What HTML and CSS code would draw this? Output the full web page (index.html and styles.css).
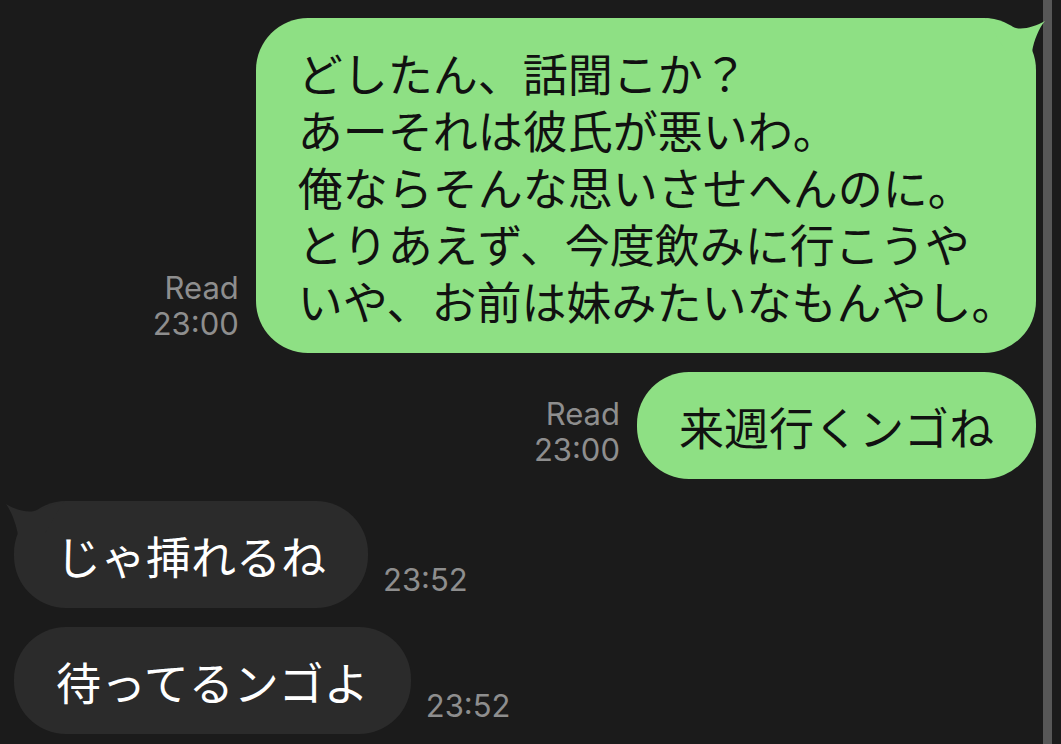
FILE: index.html
```html
<!DOCTYPE html>
<html lang="ja">
<head>
<meta charset="utf-8">
<title>chat</title>
<link rel="stylesheet" href="styles.css">
</head>
<body>
<div class="screen">
  <div class="chat">
    <div class="row out r1">
      <div class="meta"><div>Read</div><div>23:00</div></div>
      <div class="bubble green">
        どしたん、話聞こか？<br>あーそれは彼氏が悪いわ。<br>俺ならそんな思いさせへんのに。<br>とりあえず、今度飲みに行こうや<br>いや、お前は妹みたいなもんやし<span class="trim">。</span>
        <svg class="tail tail-right" viewBox="-50 0 60 40" width="60" height="40"><path d="M -50 0 C -38 2, -30 8, -20 10 C -12 12, 0 8, 9 3 C 3 10, -2 22, -4 34 L -30 34 Z"/></svg>
      </div>
    </div>
    <div class="row out r2">
      <div class="meta"><div>Read</div><div>23:00</div></div>
      <div class="bubble green">来週行くンゴね</div>
    </div>
    <div class="row in r3">
      <div class="bubble dark">じゃ挿れるね
        <svg class="tail tail-left" viewBox="-10 0 60 40" width="60" height="40"><path d="M 50 0 C 38 2, 30 8, 20 10 C 12 12, 0 8, -8 3 C -3 10, 2 22, 4 34 L 30 34 Z"/></svg>
      </div>
      <div class="meta"><div>23:52</div></div>
    </div>
    <div class="row in r4">
      <div class="bubble dark">待ってるンゴよ</div>
      <div class="meta"><div>23:52</div></div>
    </div>
  </div>
  <div class="scrollbar"></div>
</div>
</body>
</html>
```
FILE: styles.css
```css
html, body {
  margin: 0;
  padding: 0;
  background: #1b1b1b;
}
.screen {
  display: flex;
  width: 1061px;
  height: 744px;
  overflow: hidden;
}
.chat {
  flex: 0 0 1043px;
  box-sizing: border-box;
  padding: 18px 7px 0 14px;
  display: flex;
  flex-direction: column;
}
.scrollbar {
  flex: 0 0 9px;
  background: #575757;
}
.row {
  display: flex;
  align-items: flex-end;
  gap: 17px;
}
.row.out { justify-content: flex-end; }
.row.in { justify-content: flex-start; gap: 15px; }
.r2 { margin-top: 19px; }
.r3 { margin-top: 22px; }
.r4 { margin-top: 19px; }
.meta {
  font-family: Inter, "Liberation Sans", sans-serif;
  font-size: 31px;
  line-height: 36px;
  color: #8e8e8e;
  text-align: right;
  margin-bottom: 11px;
}
.row.in .meta {
  text-align: left;
  margin-bottom: 10px;
}
.bubble {
  position: relative;
  font-family: "Noto Sans CJK JP", sans-serif;
  font-size: 45px;
  line-height: 57px;
  padding: 26px 42px 24px;
  border-radius: 52px;
  white-space: nowrap;
}
.trim {
  margin-right: -0.5em;
}
.green {
  background: #8ee084;
  color: #111;
}
.dark {
  background: #2b2b2b;
  color: #fff;
}
.tail {
  position: absolute;
  top: 0;
  overflow: visible;
}
.tail-right { right: -10px; }
.tail-right path { fill: #8ee084; }
.tail-left { left: -10px; }
.tail-left path { fill: #2b2b2b; }
```
